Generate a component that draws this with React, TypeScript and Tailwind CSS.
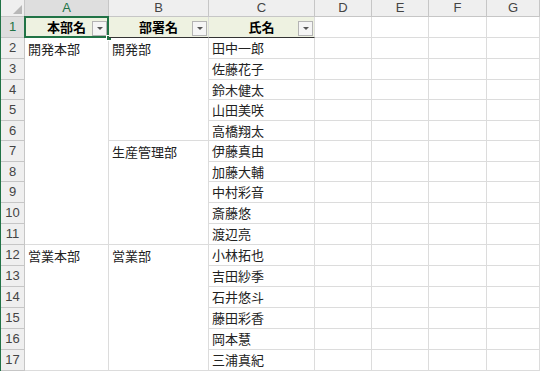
import React from "react";

const names = [
  "田中一郎",
  "佐藤花子",
  "鈴木健太",
  "山田美咲",
  "高橋翔太",
  "伊藤真由",
  "加藤大輔",
  "中村彩音",
  "斎藤悠",
  "渡辺亮",
  "小林拓也",
  "吉田紗季",
  "石井悠斗",
  "藤田彩香",
  "岡本慧",
  "三浦真紀",
];

const jp = "font-['Noto_Sans_CJK_JP','Noto_Sans',sans-serif]";
const latin = "font-['Liberation_Sans',Arial,sans-serif]";

function Filter() {
  return (
    <div className="absolute right-[1px] bottom-[1px] w-[15px] h-[15px] bg-[#f5f5f5] border border-[#b4b4b4] flex items-center justify-center">
      <div className="w-0 h-0 border-x-[3px] border-x-transparent border-t-[3px] border-t-[#555]" />
    </div>
  );
}

function RowHead({ n, selected }: { n: number; selected?: boolean }) {
  return (
    <div
      className={
        selected
          ? `col-start-1 bg-[#dedede] border-r border-b border-r-[#217346] border-b-[#c6c6c6] flex items-center justify-center text-[13px] text-[#217346] ${latin}`
          : `col-start-1 bg-[#efefef] border-r border-b border-[#c6c6c6] flex items-center justify-center text-[13px] text-[#444] ${latin}`
      }
    >
      {n}
    </div>
  );
}

function Empty() {
  return <div className="border-r border-b border-[#dcdcdc] bg-white" />;
}

export default function App() {
  const rows = [];
  for (let i = 0; i < 16; i++) {
    const r = i + 2;
    rows.push(<RowHead key={`h${r}`} n={r} />);
    if (r === 2) {
      rows.push(
        <div key="a2" className={`row-span-10 border-r border-b border-[#dcdcdc] bg-white pl-[3px] pt-[1px] text-[13px] leading-[19px] text-[#222] ${jp}`}>
          開発本部
        </div>
      );
      rows.push(
        <div key="b2" className={`row-span-5 border-r border-b border-[#dcdcdc] bg-white pl-[3px] pt-[1px] text-[13px] leading-[19px] text-[#222] ${jp}`}>
          開発部
        </div>
      );
    }
    if (r === 7) {
      rows.push(
        <div key="b7" className={`col-start-3 row-span-5 border-r border-b border-[#dcdcdc] bg-white pl-[3px] pt-[1px] text-[13px] leading-[19px] text-[#222] ${jp}`}>
          生産管理部
        </div>
      );
    }
    if (r === 12) {
      rows.push(
        <div key="a12" className={`row-span-6 border-r border-b border-[#dcdcdc] bg-white pl-[3px] pt-[1px] text-[13px] leading-[19px] text-[#222] ${jp}`}>
          営業本部
        </div>
      );
      rows.push(
        <div key="b12" className={`row-span-6 border-r border-b border-[#dcdcdc] bg-white pl-[3px] pt-[1px] text-[13px] leading-[19px] text-[#222] ${jp}`}>
          営業部
        </div>
      );
    }
    rows.push(
      <div key={`c${r}`} className={`col-start-4 border-r border-b border-[#dcdcdc] bg-white pl-[3px] flex items-center text-[13px] text-[#222] ${jp}`}>
        {names[i]}
      </div>
    );
    rows.push(<Empty key={`d${r}`} />);
    rows.push(<Empty key={`e${r}`} />);
    rows.push(<Empty key={`f${r}`} />);
    rows.push(<Empty key={`g${r}`} />);
  }

  return (
    <div className="w-[540px] h-[371px] overflow-hidden bg-white border-l border-[#217346]">
      <div className="grid grid-cols-[24px_84px_100px_106px_57px_57px_58px_1fr] grid-rows-[17px_21px_21px_21px_20px_21px_20px_21px_20px_21px_21px_21px_21px_21px_21px_21px_21px_21px]">
        {/* column headers */}
        <div className="relative bg-[#efefef] border-r border-b border-[#c6c6c6]">
          <div className="absolute right-[2px] bottom-[2px] w-0 h-0 border-l-[9px] border-l-transparent border-b-[9px] border-b-[#b8b8b8]" />
        </div>
        <div className={`bg-[#dedede] border-r border-b border-r-[#c6c6c6] border-b-[#217346] flex items-center justify-center text-[13px] text-[#217346] ${latin}`}>A</div>
        <div className={`bg-[#efefef] border-r border-b border-[#c6c6c6] flex items-center justify-center text-[13px] text-[#444] ${latin}`}>B</div>
        <div className={`bg-[#efefef] border-r border-b border-[#c6c6c6] flex items-center justify-center text-[13px] text-[#444] ${latin}`}>C</div>
        <div className={`bg-[#efefef] border-r border-b border-[#c6c6c6] flex items-center justify-center text-[13px] text-[#444] ${latin}`}>D</div>
        <div className={`bg-[#efefef] border-r border-b border-[#c6c6c6] flex items-center justify-center text-[13px] text-[#444] ${latin}`}>E</div>
        <div className={`bg-[#efefef] border-r border-b border-[#c6c6c6] flex items-center justify-center text-[13px] text-[#444] ${latin}`}>F</div>
        <div className={`bg-[#efefef] border-r border-b border-[#c6c6c6] flex items-center justify-center text-[13px] text-[#444] ${latin}`}>G</div>

        {/* row 1 */}
        <RowHead n={1} selected />
        <div className={`relative bg-[#eef2e1] border-r border-b border-r-[#dcdcdc] border-b-[#333] flex items-center justify-center text-[13px] font-bold text-black ${jp}`}>
          本部名
          <Filter />
          <div className="absolute left-[-1px] top-[-1px] right-[-1px] bottom-[-1px] border-2 border-[#217346]" />
          <div className="absolute right-[-4px] bottom-[-4px] w-[6px] h-[6px] bg-[#217346] border border-white" />
        </div>
        <div className={`relative bg-[#eef2e1] border-r border-b border-r-[#dcdcdc] border-b-[#333] flex items-center justify-center text-[13px] font-bold text-black ${jp}`}>
          部署名
          <Filter />
        </div>
        <div className={`relative bg-[#eef2e1] border-r border-b border-r-[#dcdcdc] border-b-[#333] flex items-center justify-center text-[13px] font-bold text-black ${jp}`}>
          氏名
          <Filter />
        </div>
        <Empty />
        <Empty />
        <Empty />
        <Empty />

        {rows}
      </div>
    </div>
  );
}
